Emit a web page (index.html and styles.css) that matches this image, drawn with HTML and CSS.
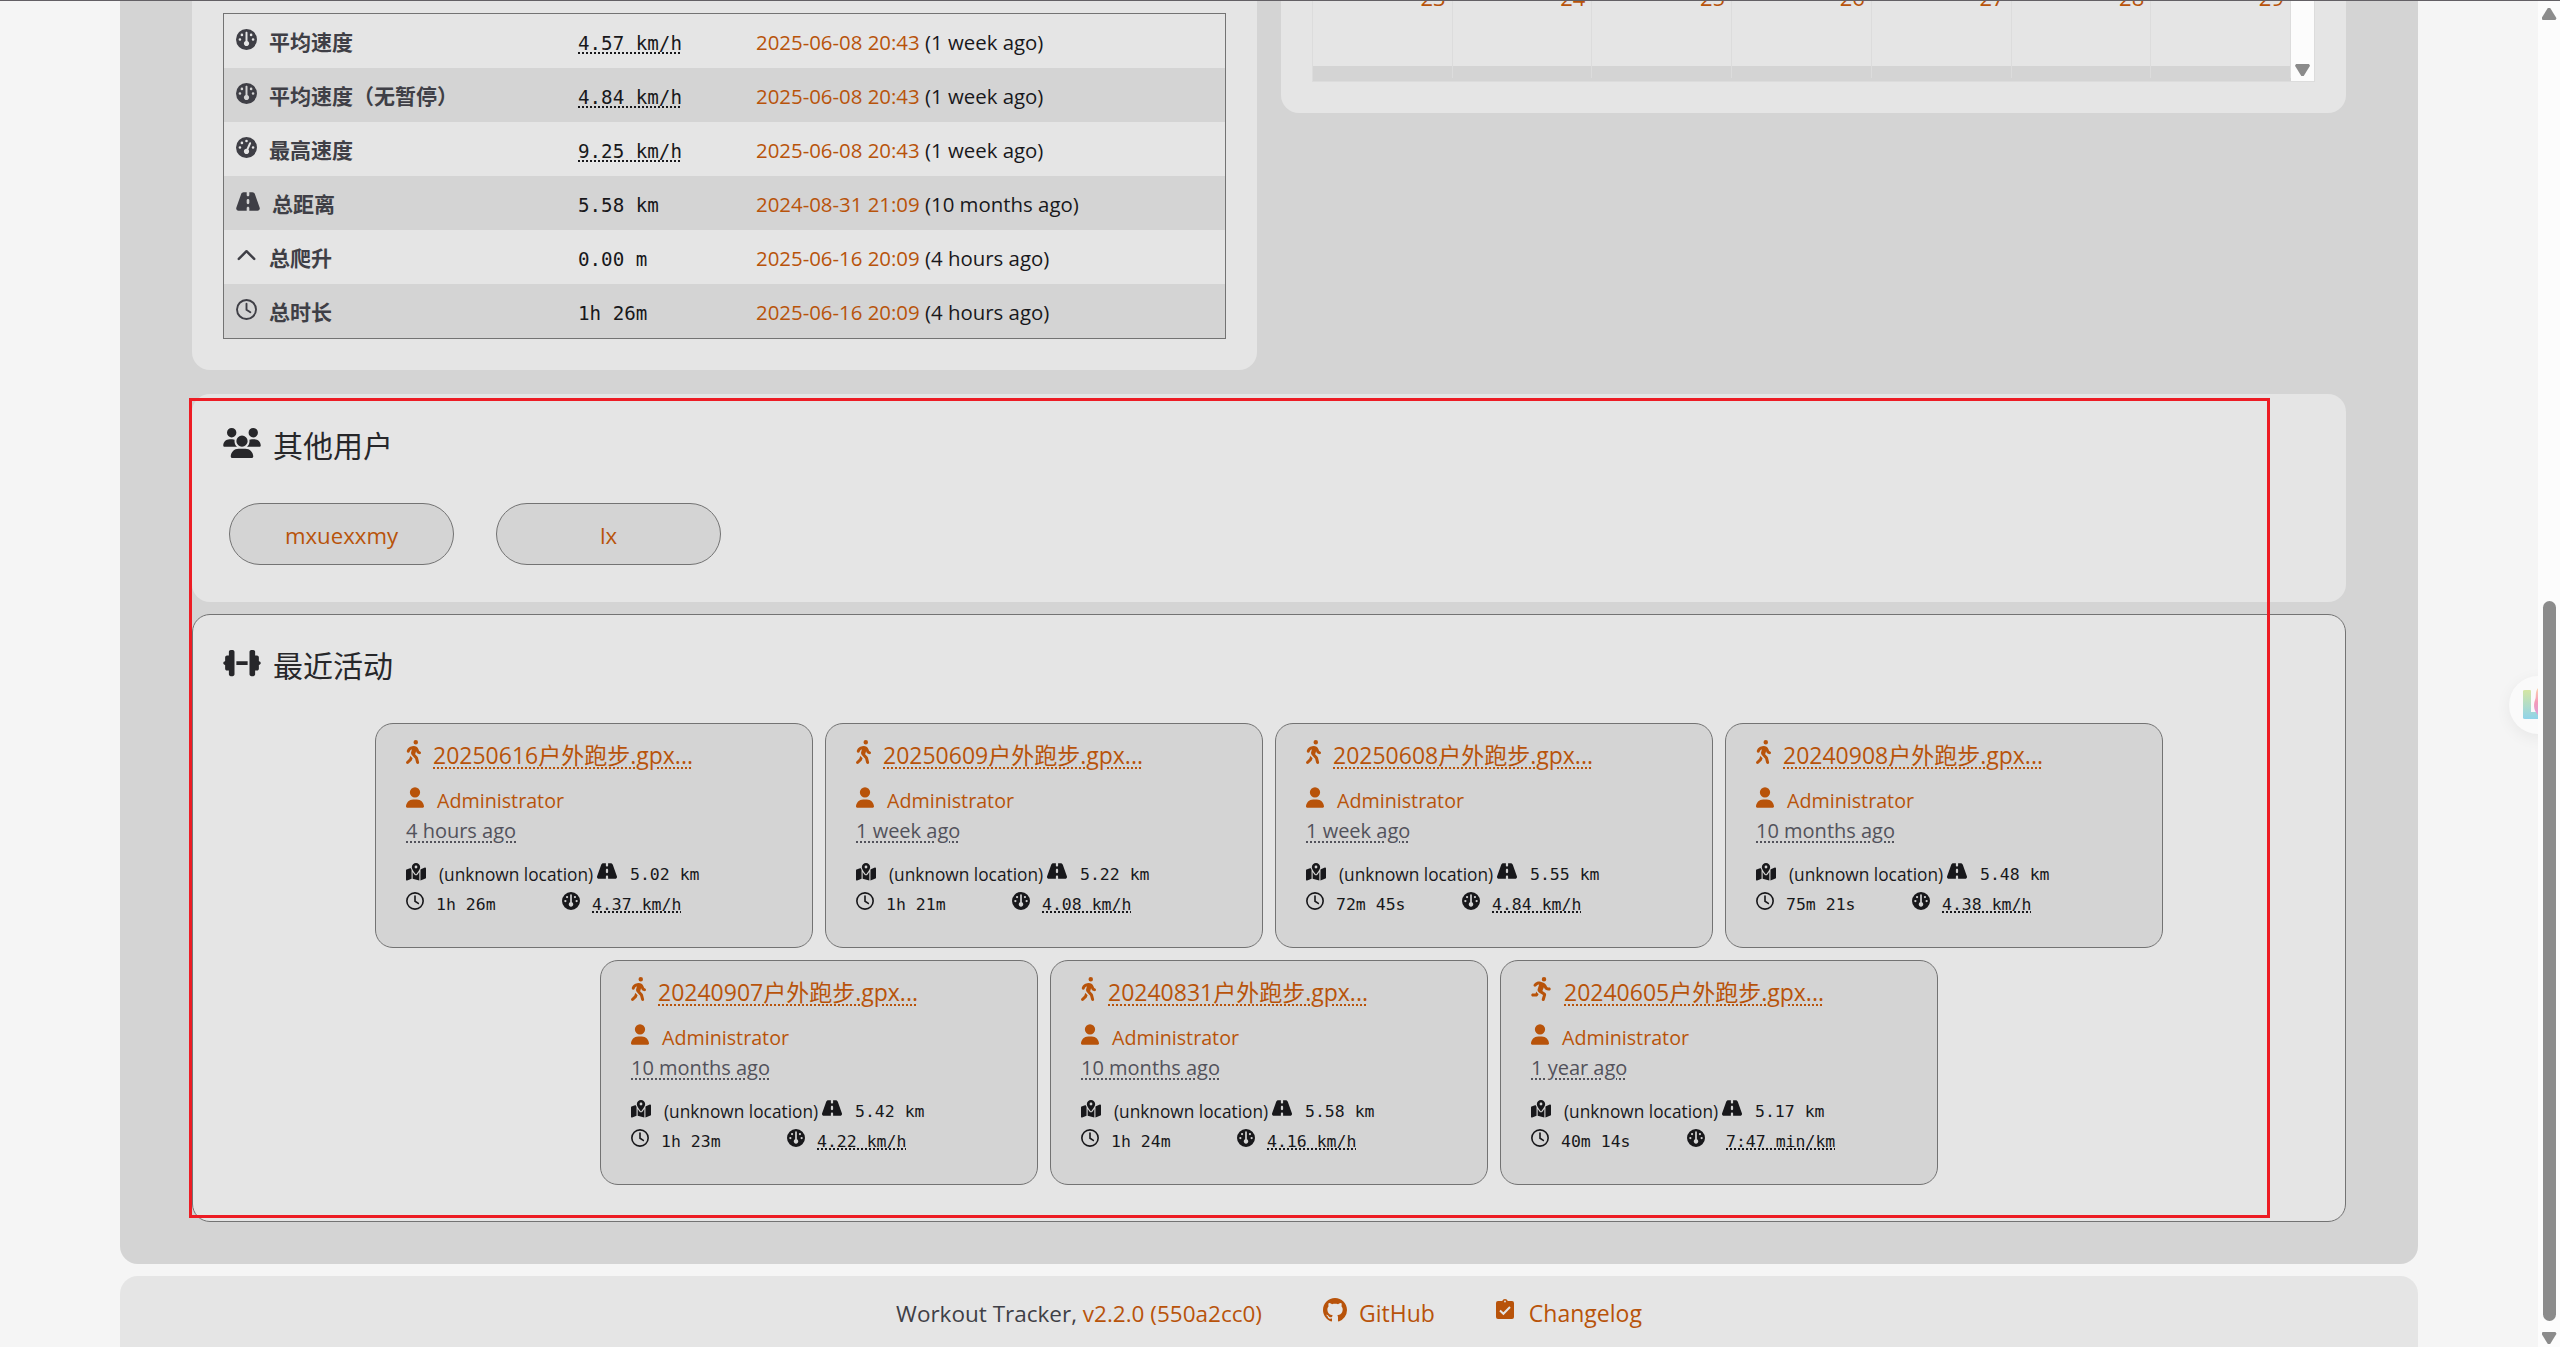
FILE: index.html
```html
<!DOCTYPE html>
<html lang="zh">
<head>
    <meta charset="UTF-8">
    <meta name="viewport" content="width=device-width, initial-scale=1.0">
    <title>Workout Tracker</title>
    <link rel="stylesheet" href="styles.css">
</head>
<body>
    <svg class="sprite">
        <symbol id="gauge" viewBox="0 0 512 512"><path d="M0 256a256 256 0 1 1 512 0A256 256 0 1 1 0 256zm320 96c0-26.9-16.5-49.9-40-59.3L280 88c0-13.3-10.7-24-24-24s-24 10.7-24 24l0 204.7c-23.5 9.5-40 32.5-40 59.3c0 35.3 28.7 64 64 64s64-28.7 64-64zM144 176a32 32 0 1 0 0-64 32 32 0 1 0 0 64zm-16 80a32 32 0 1 0 -64 0 32 32 0 1 0 64 0zm288 32a32 32 0 1 0 0-64 32 32 0 1 0 0 64zM400 144a32 32 0 1 0 -64 0 32 32 0 1 0 64 0z"/></symbol>
        <symbol id="gauge-high" viewBox="0 0 512 512"><path d="M0 256a256 256 0 1 1 512 0A256 256 0 1 1 0 256zM288 96a32 32 0 1 0 -64 0 32 32 0 1 0 64 0zM256 416c35.3 0 64-28.7 64-64c0-17.4-6.9-33.1-18.1-44.6L366 161.7c5.3-12.1-.2-26.3-12.3-31.6s-26.3 .2-31.6 12.3L257.9 288c-.6 0-1.3 0-1.9 0c-35.3 0-64 28.7-64 64s28.7 64 64 64zM176 144a32 32 0 1 0 -64 0 32 32 0 1 0 64 0zM96 288a32 32 0 1 0 0-64 32 32 0 1 0 0 64zm352-32a32 32 0 1 0 -64 0 32 32 0 1 0 64 0z"/></symbol>
        <symbol id="road" viewBox="0 0 576 512"><path d="M256 32l-74.8 0c-27.1 0-51.3 17.1-60.3 42.6L3.1 407.2C1.1 413 0 419.2 0 425.4C0 455.5 24.5 480 54.6 480L256 480l0-64c0-17.7 14.3-32 32-32s32 14.3 32 32l0 64 201.4 0c30.2 0 54.6-24.5 54.6-54.6c0-6.2-1.1-12.4-3.1-18.2L455.1 74.6C446 49.1 421.9 32 394.8 32L320 32l0 64c0 17.7-14.3 32-32 32s-32-14.3-32-32l0-64zm64 192l0 64c0 17.7-14.3 32-32 32s-32-14.3-32-32l0-64c0-17.7 14.3-32 32-32s32 14.3 32 32z"/></symbol>
        <symbol id="up" viewBox="0 0 512 512"><path d="M68 340L256 152L444 340" fill="none" stroke="currentColor" stroke-width="60" stroke-linecap="round" stroke-linejoin="round"/></symbol>
        <symbol id="clock" viewBox="0 0 512 512"><g fill="none" stroke="currentColor" stroke-width="46" stroke-linecap="round"><circle cx="256" cy="256" r="232"/><path d="M256 115V262L350 325"/></g></symbol>
        <symbol id="map" viewBox="0 0 576 512"><path d="M408 120c0 54.6-73.1 151.9-105.2 192c-7.7 9.6-22 9.6-29.6 0C241.1 271.9 168 174.6 168 120C168 53.7 221.7 0 288 0s120 53.7 120 120zm8 80.4c3.5-6.9 6.7-13.8 9.6-20.6c.5-1.2 1-2.5 1.5-3.7l116-46.4C558.9 123.4 576 135 576 152l0 270.8c0 9.8-6 18.6-15.1 22.3L416 503l0-302.6zM137.6 138.3c2.4 14.1 7.2 28.3 12.8 41.5c2.9 6.8 6.1 13.7 9.6 20.6l0 251.4L32.9 502.7C17.1 509 0 497.4 0 480.4L0 209.6c0-9.8 6-18.6 15.1-22.3l122.6-49zM327.8 332c13.9-17.4 35.7-45.7 56.2-77l0 249.3L192 449.4 192 255c20.5 31.3 42.3 59.6 56.2 77c20.5 25.6 59.1 25.6 79.6 0zM288 152a40 40 0 1 0 0-80 40 40 0 1 0 0 80z"/></symbol>
        <symbol id="user" viewBox="0 0 448 512"><path d="M224 256A128 128 0 1 0 224 0a128 128 0 1 0 0 256zm-45.7 48C79.8 304 0 383.8 0 482.3C0 498.7 13.3 512 29.7 512l388.6 0c16.4 0 29.7-13.3 29.7-29.7C448 383.8 368.2 304 269.7 304l-91.4 0z"/></symbol>
        <symbol id="walk" viewBox="0 0 320 512"><path d="M160 48a48 48 0 1 1 96 0 48 48 0 1 1 -96 0zM126.5 199.3c-1 .4-1.9 .8-2.9 1.2l-8 3.5c-16.4 7.3-29 21.2-34.7 38.2l-2.6 7.8c-5.6 16.8-23.7 25.8-40.5 20.2s-25.8-23.7-20.2-40.5l2.6-7.8c11.4-34.1 36.6-61.9 69.4-76.5l8-3.5c20.8-9.2 43.3-14 66.1-14c44.6 0 84.8 26.8 101.9 67.9L281 232.7l21.4 10.7c15.8 7.9 22.2 27.1 14.3 42.9s-27.1 22.2-42.9 14.3L247 287.3c-10.3-5.2-18.4-13.8-22.8-24.5l-9.6-23-19.3 65.5 49.5 54c5.4 5.9 9.2 13 11.2 20.8l23 92.1c4.3 17.1-6.1 34.5-23.3 38.8s-34.5-6.1-38.8-23.3l-22-88.1-70.7-77.1c-14.8-16.1-20.3-38.6-14.7-59.7l16.9-63.5zM68.7 398l25-62.4c2.1 3 4.5 5.8 7 8.6l40.7 44.4-14.5 36.2c-2.4 6-6 11.5-10.6 16.1L54.6 502.6c-12.5 12.5-32.8 12.5-45.3 0s-12.5-32.8 0-45.3L68.7 398z"/></symbol>
        <symbol id="run" viewBox="0 0 416 512"><path d="M320 48a48 48 0 1 0 -96 0 48 48 0 1 0 96 0zM125.7 175.5c9.9-9.9 23.4-15.5 37.5-15.5c1.9 0 3.8 .1 5.6 .3L137.6 254c-9.3 28 1.7 58.8 26.8 74.5l86.2 53.9-25.4 88.8c-4.9 17 5 34.7 22 39.6s34.7-5 39.6-22l28.7-100.4c5.9-20.6-2.6-42.6-20.7-53.9L238 299l30.9-82.4 5.1 12.3C289 264.7 323.9 288 362.7 288l21.3 0c17.7 0 32-14.3 32-32s-14.3-32-32-32l-21.3 0c-12.9 0-24.6-7.8-29.5-19.7l-6.3-15c-14.6-35.1-44.1-61.9-80.5-73.1l-48.7-15c-11.1-3.4-22.7-5.2-34.4-5.2c-31 0-60.8 12.3-82.7 34.3L57.4 153.4c-12.5 12.5-12.5 32.8 0 45.3s32.8 12.5 45.3 0l23.1-23.1zM91.2 352L32 352c-17.7 0-32 14.3-32 32s14.3 32 32 32l69.6 0c19 0 36.2-11.2 43.9-28.5L157 361.6l-9.5-6c-17.5-10.9-30.5-26.8-37.9-44.9L91.2 352z"/></symbol>
        <symbol id="users" viewBox="0 0 640 512"><path d="M144 0a80 80 0 1 1 0 160A80 80 0 1 1 144 0zM512 0a80 80 0 1 1 0 160A80 80 0 1 1 512 0zM0 298.7C0 239.8 47.8 192 106.7 192l42.7 0c15.9 0 31 3.5 44.6 9.7c-1.3 7.2-1.9 14.7-1.9 22.3c0 38.2 16.8 72.5 43.3 96c-.2 0-.4 0-.7 0L21.3 320C9.6 320 0 310.4 0 298.7zM405.3 320c-.2 0-.4 0-.7 0c26.6-23.5 43.3-57.8 43.3-96c0-7.6-.7-15-1.9-22.3c13.6-6.3 28.7-9.7 44.6-9.7l42.7 0C592.2 192 640 239.8 640 298.7c0 11.8-9.6 21.3-21.3 21.3l-213.3 0zM224 224a96 96 0 1 1 192 0 96 96 0 1 1 -192 0zM128 485.3C128 411.7 187.7 352 261.3 352l117.3 0C452.3 352 512 411.7 512 485.3c0 14.7-11.9 26.7-26.7 26.7l-330.7 0c-14.7 0-26.7-11.9-26.7-26.7z"/></symbol>
        <symbol id="dumbbell" viewBox="0 0 640 512"><path d="M96 64c0-17.7 14.3-32 32-32l32 0c17.7 0 32 14.3 32 32l0 384c0 17.7-14.3 32-32 32l-32 0c-17.7 0-32-14.3-32-32l0-64-32 0c-17.7 0-32-14.3-32-32l0-64c-17.7 0-32-14.3-32-32s14.3-32 32-32l0-64c0-17.7 14.3-32 32-32l32 0 0-64zm448 0l0 64 32 0c17.7 0 32 14.3 32 32l0 64c17.7 0 32 14.3 32 32s-14.3 32-32 32l0 64c0 17.7-14.3 32-32 32l-32 0 0 64c0 17.7-14.3 32-32 32l-32 0c-17.7 0-32-14.3-32-32l0-384c0-17.7 14.3-32 32-32l32 0c17.7 0 32 14.3 32 32zM416 224l0 64-192 0 0-64 192 0z"/></symbol>
        <symbol id="github" viewBox="0 0 16 16"><path d="M8 0C3.58 0 0 3.58 0 8c0 3.54 2.29 6.53 5.47 7.59.4.07.55-.17.55-.38 0-.19-.01-.82-.01-1.49-2.01.37-2.53-.49-2.69-.94-.09-.23-.48-.94-.82-1.13-.28-.15-.68-.52-.01-.53.63-.01 1.08.58 1.23.82.72 1.21 1.87.87 2.33.66.07-.52.28-.87.51-1.07-1.78-.2-3.64-.89-3.64-3.95 0-.87.31-1.59.82-2.15-.08-.2-.36-1.02.08-2.12 0 0 .67-.21 2.2.82.64-.18 1.32-.27 2-.27s1.36.09 2 .27c1.53-1.04 2.2-.82 2.2-.82.44 1.1.16 1.92.08 2.12.51.56.82 1.27.82 2.15 0 3.07-1.87 3.75-3.65 3.95.29.25.54.73.54 1.48 0 1.07-.01 1.93-.01 2.2 0 .21.15.46.55.38A8.01 8.01 0 0 0 16 8c0-4.42-3.58-8-8-8z"/></symbol>
        <symbol id="clipboard" viewBox="0 0 18 20"><path fill-rule="evenodd" d="M2 2H6.2A3 3 0 0 1 11.8 2H16A2 2 0 0 1 18 4V18A2 2 0 0 1 16 20H2A2 2 0 0 1 0 18V4A2 2 0 0 1 2 2zM9 1.6a.9 .9 0 1 0 0 1.8 .9 .9 0 1 0 0-1.8z"/><path d="M4 11.5L7.4 14.8L14 8" fill="none" stroke="#e5e5e5" stroke-width="2"/></symbol>
    </svg>

    <div class="page">
        <main>
            <div class="columns">
                <section class="panel records">
                    <table>
                        <tr><th><svg class="i18"><use href="#gauge"/></svg>平均速度</th><td><code><u>4.57 km/h</u></code></td><td><a>2025-06-08 20:43</a> (1 week ago)</td></tr>
                        <tr><th><svg class="i18"><use href="#gauge"/></svg>平均速度（无暂停）</th><td><code><u>4.84 km/h</u></code></td><td><a>2025-06-08 20:43</a> (1 week ago)</td></tr>
                        <tr><th><svg class="i18"><use href="#gauge-high"/></svg>最高速度</th><td><code><u>9.25 km/h</u></code></td><td><a>2025-06-08 20:43</a> (1 week ago)</td></tr>
                        <tr><th><svg class="i24"><use href="#road"/></svg>总距离</th><td><code>5.58 km</code></td><td><a>2024-08-31 21:09</a> (10 months ago)</td></tr>
                        <tr><th><svg class="i18"><use href="#up"/></svg>总爬升</th><td><code>0.00 m</code></td><td><a>2025-06-16 20:09</a> (4 hours ago)</td></tr>
                        <tr><th><svg class="i18"><use href="#clock"/></svg>总时长</th><td><code>1h 26m</code></td><td><a>2025-06-16 20:09</a> (4 hours ago)</td></tr>
                    </table>
                </section>
                <section class="panel calendar">
                    <div class="cal">
                        <div class="days"><a>23</a><a>24</a><a>25</a><a>26</a><a>27</a><a>28</a><a>29</a></div>
                        <div class="calbar"><span class="arrow down"></span></div>
                    </div>
                </section>
            </div>

            <section class="panel others">
                <h2><svg><use href="#users"/></svg>其他用户</h2>
                <div class="pills"><a>mxuexxmy</a><a>lx</a></div>
            </section>

            <section class="panel recent">
                <h2><svg><use href="#dumbbell"/></svg>最近活动</h2>
                <div class="cards" id="cards"></div>
            </section>
        </main>

        <footer>
            <span>Workout Tracker, <a>v2.2.0 (550a2cc0)</a></span>
            <a><svg class="gh"><use href="#github"/></svg>GitHub</a>
            <a><svg class="cl"><use href="#clipboard"/></svg>Changelog</a>
        </footer>
    </div>

    <div class="topline"></div>
    <div class="marker"></div>
    <div class="bubble">
        <svg viewBox="0 0 58 58"><defs><linearGradient id="lg" x2="0" y2="1"><stop offset="0" stop-color="#d5e6a3"/><stop offset="1" stop-color="#8fd3ea"/></linearGradient><linearGradient id="pg" x2="0" y2="1"><stop offset="0" stop-color="#fbd9b0"/><stop offset=".5" stop-color="#f49ab8"/><stop offset="1" stop-color="#d9a0dd"/></linearGradient></defs><path d="M16 14H21Q22 14 22 15V36H40V43H16Q14 43 14 42V15Q14 14 16 14Z" fill="url(#lg)"/><path d="M30 11C25 16 28 20 26 24C24 30 25 36 31 41Z" fill="url(#pg)"/></svg>
    </div>
    <div class="scroll"><span class="arrow up"></span><div class="thumb"></div><span class="arrow down"></span></div>

<script>
    var workouts = [
        ["walk", "20250616", "4 hours ago", "5.02 km", "1h 26m", "4.37 km/h"],
        ["walk", "20250609", "1 week ago", "5.22 km", "1h 21m", "4.08 km/h"],
        ["walk", "20250608", "1 week ago", "5.55 km", "72m 45s", "4.84 km/h"],
        ["walk", "20240908", "10 months ago", "5.48 km", "75m 21s", "4.38 km/h"],
        ["walk", "20240907", "10 months ago", "5.42 km", "1h 23m", "4.22 km/h"],
        ["walk", "20240831", "10 months ago", "5.58 km", "1h 24m", "4.16 km/h"],
        ["run", "20240605", "1 year ago", "5.17 km", "40m 14s", "7:47 min/km"]
    ];

    function icon(name){
        return '<svg class="' + name + '"><use href="#' + name + '"/></svg>';
    }

    var html = "";
    for(var i = 0; i < workouts.length; i++){
        var w = workouts[i];
        html += '<div class="card">' +
            '<div class="title">' + icon(w[0]) + '<u>' + w[1] + '户外跑步.gpx...</u></div>' +
            '<div class="owner">' + icon("user") + 'Administrator</div>' +
            '<div class="when"><u>' + w[2] + '</u></div>' +
            '<div class="line place">' + icon("map") + '<span class="loc">(unknown location)</span>' + icon("road") + '<code>' + w[3] + '</code></div>' +
            '<div class="line"><span class="time">' + icon("clock") + '<code>' + w[4] + '</code></span>' + icon("gauge") +
            '<code class="' + (w[0] == "run" ? "pace" : "") + '"><u>' + w[5] + '</u></code></div>' +
            '</div>';
    }
    document.getElementById("cards").innerHTML = html;
</script>
</body>
</html>
```
FILE: styles.css
```css
*{
    box-sizing:border-box;
}
html, body{
    height:100%;
    overflow:hidden;
}
body{
    margin:0;
    background-color:#f5f5f5;
    color:#18181b;
    font-family:"Open Sans", "Noto Sans CJK SC", sans-serif;
    font-size:20px;
}
svg{
    fill:currentColor;
    flex:none;
}
.sprite{
    display:none;
}
a{
    color:#b8530a;
}
code{
    font-family:"DejaVu Sans Mono", monospace;
    font-size:19.2px;
}
u{
    text-decoration:underline dotted;
    text-decoration-thickness:2px;
    text-underline-offset:3px;
}
.page{
    width:2298px;
    margin-left:120px;
}
main{
    height:1264px;
    padding:0 72px;
    background-color:#d4d4d4;
    border-radius:0 0 18px 18px;
}
.panel{
    background-color:#e5e5e5;
    border-radius:18px;
}
.columns{
    display:flex;
    gap:24px;
    align-items:flex-start;
    height:394px;
}
.records{
    width:1065px;
    height:370px;
    padding:13px 31px 0;
    border-radius:0 0 18px 18px;
}
table{
    width:1003px;
    border:1px solid #737373;
    border-collapse:separate;
    border-spacing:0;
    table-layout:fixed;
}
tr:nth-child(even){
    background-color:#d4d4d4;
}
th, td{
    height:54px;
    padding:0 0 0 12px;
    text-align:left;
    white-space:nowrap;
}
td{
    padding-top:1px;
    font-size:20.4px;
}
th{
    width:342px;
    font-size:21px;
    color:#3f3f46;
}
th svg{
    margin-right:12px;
    vertical-align:0;
}
td:nth-child(2){
    width:178px;
}
.i18{
    width:21px;
    height:21px;
}
.i24{
    width:24px;
    height:21px;
}
.calendar{
    width:1065px;
    height:113px;
    padding:0 31px;
    border-radius:0 0 18px 18px;
}
.cal{
    display:flex;
    height:82px;
    border:1px solid #dcdcdc;
    border-top:none;
}
.days{
    display:grid;
    grid-template-columns:repeat(7, 1fr);
    flex:1;
    background:linear-gradient(#e5e5e5 66px, #d4d4d4 66px);
}
.days a{
    height:100%;
    padding-right:6px;
    border-right:1px solid #dcdcdc;
    text-align:right;
    font-size:22px;
    line-height:0;
    margin-top:-3px;
}
.calbar{
    display:flex;
    align-items:flex-end;
    justify-content:center;
    width:23px;
    padding-bottom:5px;
    background-color:#fcfcfc;
}
.arrow{
    width:15px;
    height:12px;
    background-color:#8b8b8b;
}
.up{
    clip-path:polygon(42% 0, 58% 0, 100% 85%, 93% 100%, 7% 100%, 0 85%);
}
.down{
    clip-path:polygon(7% 0, 93% 0, 100% 15%, 58% 100%, 42% 100%, 0 15%);
}
h2{
    display:flex;
    gap:12px;
    margin:0;
    font-size:30px;
    font-weight:400;
    line-height:44px;
    color:#27272a;
}
h2 svg{
    width:38px;
    height:30px;
    margin-top:4px;
}
.others{
    height:208px;
    padding:30px 31px;
}
.pills{
    display:flex;
    gap:42px;
    margin:35px 0 0 6px;
}
.pills a{
    width:225px;
    height:62px;
    border:1px solid #737373;
    border-radius:31px;
    background-color:#d4d4d4;
    text-align:center;
    font-size:22.2px;
    line-height:63px;
}
.recent{
    height:608px;
    margin-top:12px;
    padding:29px 30px;
    border:1px solid #737373;
}
.cards{
    display:flex;
    flex-wrap:wrap;
    justify-content:center;
    gap:12px;
    margin-top:35px;
    padding:0 100px;
}
.card{
    width:438px;
    height:225px;
    padding:14px 30px;
    border:1px solid #737373;
    border-radius:18px;
    background-color:#d4d4d4;
    white-space:nowrap;
}
.title, .owner, .line, .time{
    display:flex;
}
.title{
    gap:12px;
    height:42px;
    font-size:23px;
    line-height:34px;
    color:#b8530a;
}
.walk{
    width:15px;
    height:24px;
    margin-top:2px;
}
.run{
    width:20px;
    height:24px;
    margin-top:2px;
    margin-right:1px;
}
.owner{
    gap:13px;
    height:34px;
    font-size:19.7px;
    line-height:42px;
    color:#b8530a;
}
.user{
    width:18px;
    height:21px;
    margin-top:7px;
}
.when{
    height:42px;
    line-height:34px;
    color:#52525b;
}
.line{
    height:30px;
    font-size:17.3px;
    line-height:37px;
}
.place{
    line-height:38px;
}
.line code{
    font-size:16.5px;
}
.line code u{
    text-underline-offset:1px;
}
.map, .line .road{
    width:20px;
    height:18px;
    margin-top:7px;
}
.loc{
    margin:0 7px 0 13px;
    width:151px;
}
.line .road{
    margin-right:13px;
    margin-top:6px;
}
.clock, .gauge{
    width:18px;
    height:18px;
    margin-top:6px;
    margin-right:12px;
}
.time{
    width:156px;
}
.pace{
    margin-left:9px;
}
footer{
    display:flex;
    justify-content:center;
    gap:61px;
    height:90px;
    margin-top:12px;
    padding-top:20px;
    border-radius:18px 18px 0 0;
    background-color:#e5e5e5;
    font-size:23px;
    line-height:35px;
    color:#3f3f46;
}
footer > span{
    font-size:22.5px;
}
footer > a{
    display:flex;
    gap:12px;
}
.gh{
    width:24px;
    height:24px;
    margin-top:2px;
}
.cl{
    width:18px;
    height:20px;
    margin-top:3px;
    margin-right:3px;
}
.topline{
    position:absolute;
    top:0;
    left:0;
    width:100%;
    height:1px;
    background-color:#636065;
}
/* red highlight over the two lower panels */
.marker{
    position:absolute;
    left:189px;
    top:398px;
    width:2081px;
    height:820px;
    border:3px solid #ed1c24;
}
.bubble{
    position:absolute;
    right:-7px;
    top:676px;
    width:58px;
    height:58px;
    border-radius:50%;
    background-color:#fafafa;
    box-shadow:0 4px 16px rgba(0, 0, 0, 0.06);
}
.scroll{
    position:absolute;
    top:1px;
    right:0;
    bottom:0;
    display:flex;
    flex-direction:column;
    align-items:center;
    width:22px;
    padding:7px 0 3px;
    background-color:#fcfcfc;
}
.thumb{
    width:13px;
    height:720px;
    margin:581px 0 auto;
    border-radius:7px;
    background-color:#8b8b8b;
}
```
